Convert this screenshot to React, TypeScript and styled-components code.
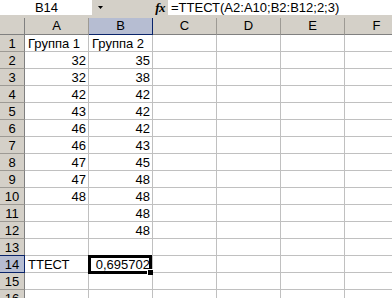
import React from "react";
import styled, { createGlobalStyle } from "styled-components";

const Global = createGlobalStyle`
  html, body { margin: 0; padding: 0; background: #fff; overflow: hidden; }
  body { font-family: "Liberation Sans", Arial, sans-serif; }
`;

const Page = styled.div`
  width: 392px;
  height: 298px;
  overflow: hidden;
  background: #fff;
  font-family: "Liberation Sans", Arial, sans-serif;
  font-size: 13px;
  color: #000;
`;

const FormulaBar = styled.div`
  display: flex;
  align-items: flex-start;
  height: 18px;
  background: #d4d0c8;
`;

const NameBox = styled.div`
  width: 92px;
  height: 15px;
  line-height: 15px;
  background: #fff;
  text-align: center;
  padding-left: 1px;
  box-sizing: border-box;
`;

const ButtonArea = styled.div`
  width: 76px;
  height: 15px;
  display: flex;
  align-items: center;
`;

const Arrow = styled.svg`
  margin-left: 6px;
  margin-top: -1px;
`;

const Fx = styled.span`
  margin-left: auto;
  margin-right: 3px;
  font-family: "Liberation Serif", "Times New Roman", serif;
  font-style: italic;
  font-weight: bold;
  font-size: 13px;
  letter-spacing: -0.5px;
  line-height: 15px;
`;

const FormulaInput = styled.div`
  flex: 1;
  height: 15px;
  line-height: 15px;
  background: #fff;
  padding-left: 3px;
  white-space: nowrap;
`;

const Grid = styled.div`
  display: grid;
  grid-template-columns: 25px repeat(6, 64px);
  grid-auto-rows: 17px;
`;

const Corner = styled.div`
  background: #d4d0c8;
  border-right: 1px solid #808080;
  border-bottom: 1px solid #808080;
  box-sizing: border-box;
`;

const ColHeader = styled.div<{ $selected?: boolean }>`
  background: ${(p) => (p.$selected ? "#b6bdd2" : "#d4d0c8")};
  border-right: 1px solid ${(p) => (p.$selected ? "#0a246a" : "#9d9a94")};
  border-bottom: 1px solid ${(p) => (p.$selected ? "#0a246a" : "#808080")};
  box-sizing: border-box;
  text-align: center;
  line-height: 16px;
`;

const RowHeader = styled.div<{ $selected?: boolean }>`
  position: relative;
  background: ${(p) => (p.$selected ? "#b6bdd2" : "#d4d0c8")};
  border-right: 1px solid ${(p) => (p.$selected ? "#0a246a" : "#808080")};
  border-bottom: 1px solid ${(p) => (p.$selected ? "#0a246a" : "#9d9a94")};
  box-shadow: ${(p) => (p.$selected ? "0 -1px 0 #0a246a" : "none")};
  box-sizing: border-box;
  text-align: center;
  line-height: 16px;
  padding-top: 1px;
`;

const Cell = styled.div<{ $align?: "left" | "right" }>`
  position: relative;
  border-right: 1px solid #c0c0c0;
  border-bottom: 1px solid #c0c0c0;
  box-sizing: border-box;
  text-align: ${(p) => p.$align || "left"};
  padding: 1px 2px 0 3px;
  line-height: 16px;
  white-space: nowrap;
`;

const Selection = styled.div`
  position: absolute;
  left: -1px;
  top: -1px;
  right: 0;
  bottom: -2px;
  border: 3px solid #000;
  z-index: 2;
  pointer-events: none;
`;

const FillHandle = styled.div`
  position: absolute;
  right: -4px;
  bottom: -4px;
  width: 5px;
  height: 5px;
  background: #000;
  border: 1px solid #fff;
  border-width: 1px 0 0 1px;
`;

const CellText = styled.span`
  position: relative;
  z-index: 3;
`;

const cols = ["A", "B", "C", "D", "E", "F"];

type Row = (string | number | null)[];
const data: Row[] = [
  ["Группа 1", "Группа 2"],
  [32, 35],
  [32, 38],
  [42, 42],
  [43, 42],
  [46, 42],
  [46, 43],
  [47, 45],
  [47, 48],
  [48, 48],
  [null, 48],
  [null, 48],
  [],
  ["ТТЕСТ", "0,695702"],
  [],
  [],
];

export default function App() {
  return (
    <Page>
      <Global />
      <FormulaBar>
        <NameBox>B14</NameBox>
        <ButtonArea>
          <Arrow width="5" height="3" viewBox="0 0 5 3">
            <polygon points="0,0 5,0 2.5,3" fill="#000" />
          </Arrow>
          <Fx>fx</Fx>
        </ButtonArea>
        <FormulaInput>=ТТЕСТ(A2:A10;B2:B12;2;3)</FormulaInput>
      </FormulaBar>
      <Grid>
        <Corner />
        {cols.map((c) => (
          <ColHeader key={c} $selected={c === "B"}>
            {c}
          </ColHeader>
        ))}
        {data.map((row, r) => {
          const rowNum = r + 1;
          return (
            <React.Fragment key={rowNum}>
              <RowHeader $selected={rowNum === 14}>{rowNum}</RowHeader>
              {cols.map((c, ci) => {
                const v = row[ci];
                const isNum =
                  typeof v === "number" || (typeof v === "string" && /^[\d,]+$/.test(v));
                const selected = rowNum === 14 && c === "B";
                return (
                  <Cell key={c} $align={isNum ? "right" : "left"}>
                    {selected ? (
                      <>
                        <Selection>
                          <FillHandle />
                        </Selection>
                        <CellText>{v}</CellText>
                      </>
                    ) : (
                      v ?? ""
                    )}
                  </Cell>
                );
              })}
            </React.Fragment>
          );
        })}
      </Grid>
    </Page>
  );
}
